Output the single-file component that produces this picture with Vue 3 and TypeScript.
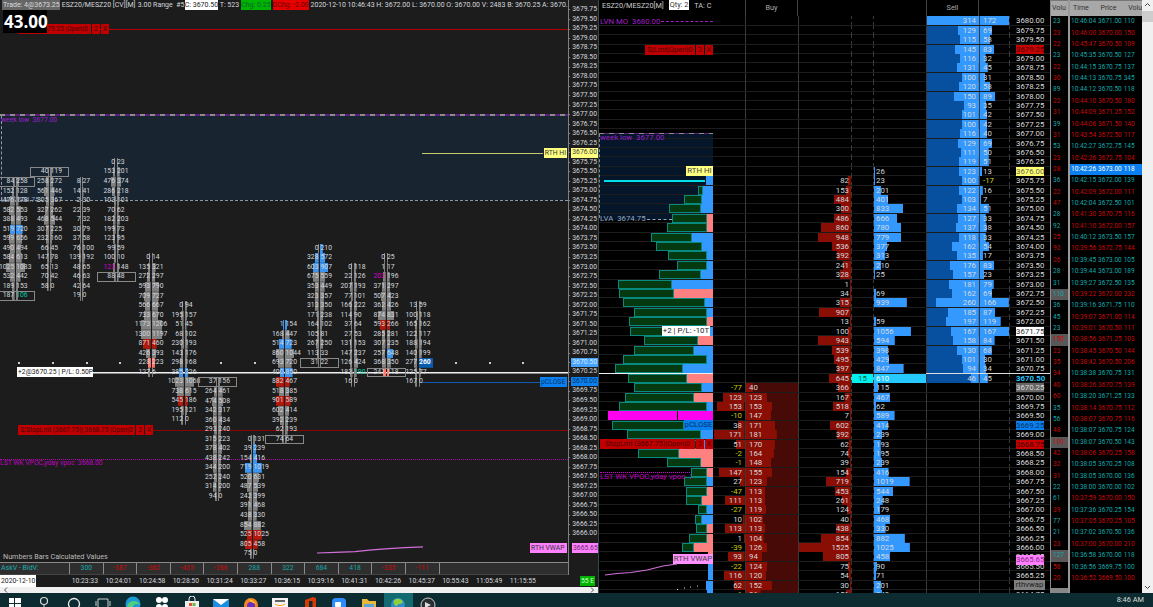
<script setup lang="ts">
type FpRow = { a: string; b: string; flags: string[] }

const ROW_L = 9.545

// footprint columns of the left chart: x = centre, r = first row under 3679.75
const fpData: { x: number; r: number; rows: string }[] = [
  { x: 14.7, r: 18, rows: '84,258,box 152,128 476,178 582,553 388,493 519,720,lb,rb 599,656 490,494 584,613 1025,1083 532,442 189,153 187,106,box,rt' },
  { x: 49, r: 17, rows: '40,119,box 258,272 561,446 305,367 327,262 468,544 307,225 232,160 66,45 147,78 65,13 70,42 58,0' },
  { x: 81, r: 18, rows: '8,27 14,41 2,30 22,39 7,32 30,79 37,58 76,100 139,192 48,65 46,63 42,64 19,0' },
  { x: 115.5, r: 16, rows: '0,23 153,201 476,374 286,218 103,101 70,62 182,203 199,73 123,95 99,59 100,10 123,148,lm 88,48,box' },
  { x: 150.5, r: 26, rows: '0,14 135,321 272,297 593,790 709,727 566,667 733,670 1173,1206 1300,1197 871,460,lr,rr 426,393 228,223,lp,rp 127,6' },
  { x: 183.5, r: 31, rows: '0,94 195,157 51,45 68,102 230,193 143,176 298,168 385,226,lb,rb 1023,1068 738,615 545,186,lr,rr 195,121 112,0' },
  { x: 217, r: 39, rows: '37,156,box 264,461 474,508 342,317 360,434 293,240 315,223 378,402 438,242 344,200 252,240 314,200 94,0' },
  { x: 252, r: 45, rows: '0,131 39,239,rb 154,416,rb 719,1019,lb,rb 520,631 487,539 242,399 391,468 438,330 854,882 525,1025,lr,rr 805,458,lr,rr 75,0' },
  { x: 284, r: 33, rows: '1,154,lb,rb 168,447 514,723,lb,rb 860,1044 693,720 400,850,lb,rb 882,467,lr,rr 518,385 901,589,lr,rr 602,414 392,239 62,193 74,64,box' },
  { x: 319, r: 25, rows: '0,210,rb 328,572,lb,rb 603,907,lb,rb 675,559 353,449 323,357 313,350 171,238 164,102 105,81 267,250 113,33 31,22,box' },
  { x: 352.5, r: 27, rows: '0,118 22,126 207,193 77,101 166,222 114,90 37,64 27,53 131,153 147,237 126,424 183,190,rt 16,0' },
  { x: 385.5, r: 26, rows: '0,25 1,17 202,196,lm 371,297 507,423 362,426 874,831 593,266,lr,rr 285,281 307,235 257,648,rb 368,350 241,118,box,lp,rp' },
  { x: 417.5, r: 31, rows: '13,59 100,118 165,162 122,117 188,194 140,199 277,260,rs 125,77 167,0' },
]

const fpColumns = fpData.map((c) => ({
  left: c.x - 18,
  top: 10 + ROW_L * c.r - ROW_L / 2,
  rows: c.rows.split(' ').map((s): FpRow => {
    const [a, b, ...flags] = s.split(',')
    return { a, b, flags }
  }),
}))

function fpBar(v: string) {
  return { backgroundSize: `${Math.min(10, 1.2 + Number(v) * 0.0075)}px 100%` }
}

const dots = [18, 52, 86, 119, 220, 254, 455, 489, 522]

const axisRows = Array.from({ length: 56 }, (_, r) => (3679.75 - r * 0.25).toFixed(2))
const axisTags: Record<string, string> = { '3676.00': 'yellow', '3670.50': 'sky', '3670.00': 'blue' }

const calc: [string, boolean][] = [
  ['300', true], ['-387', false], ['-362', false], ['-435', false], ['-286', false], ['288', true],
  ['322', true], ['684', true], ['418', true], ['-335', false], ['-111', false], ['', true],
]
const times = ['10:23:33', '10:24:01', '10:24:58', '10:28:50', '10:31:24', '10:33:27', '10:36:15', '10:39:16', '10:41:31', '10:42:26', '10:45:37', '10:55:43', '11:05:49', '11:15:55']

// ladder columns, indexed by row under 3680.00
const sellA = [314, 129, 115, 145, 116, 131, 100, 120, 150, 93, 101, 100, 116, 129, 111, 119, 123, 100, 122, 103, 134, 127, 137, 118, 162, 135, 176, 157, 181, 162, 260, 185, 197, 167, 158, 130, 101, 94, 46]
const sellB = [172, 69, 58, 83, 32, 45, 31, 58, 89, 35, 42, 42, 40, 69, 50, 51, 13, -17, 16, 7, 51, 33, 38, 33, 54, 17, 83, 23, 79, 69, 166, 87, 119, 167, 84, 68, 30, 34, 45]
const bidSize: Record<number, number> = {}
const askSize: Record<number, number> = {}
;[82, 153, 484, 300, 486, 860, 948, 536, 392, 241, 328, 1, 34, 315, 907, 13, 100, 943, 539, 495, 397, 645, 366, 167, 518, 7, 602, 392, 62, 74, 39, 154, 719, 453, 261, 124, 40, 438, 854, 1525, 805, 75, 54, 30, 151].forEach((v, k) => (bidSize[k + 17] = v))
;[26, 23, 201, 401, 833, 666, 780, 779, 377, 313, 210, 25, 0, 69, 939, 0, 59, 1056, 594, 398, 429, 847, 610, 115, 467, 62, 589, 414, 239, 193, 195, 239, 416, 1019, 544, 248, 179, 468, 330, 882, 1025, 458, 90, 71, 201, 240].forEach((v, k) => (askSize[k + 16] = v))
const buyA = [-77, 123, 153, -10, 38, 171, 51, -2, -1, 147, 27, -47, 111, -27, 10, 113, 1, -39, 93, -22, 116, 62, -6]
const buyB = [40, 123, 153, 147, 171, 181, 170, 164, 148, 155, 123, 113, 113, 119, 102, 113, 104, 126, 94, 124, 120, 152, 86]

// volume profile: [green left, green right, fill colour], in px from the panel edge, from row 17
const profile: [number, number, string][] = [
  [107, 107, 'b'], [99, 104, 'b'], [85, 103, 'b'], [70, 102, 'b'], [73, 108, 'p'], [68, 108, 'p'], [52, 93, 'b'],
  [57, 103, 'b'], [69, 108, 'b'], [78, 108, 'b'], [60, 102, 'b'], [19, 73, 'b'], [20, 75, 'p'], [24, 106, 'b'],
  [35, 108, 'b'], [30, 108, 'p'], [31, 108, 'b'], [45, 99, 'p'], [35, 95, 'b'], [24, 108, 'b'], [16, 84, 'b'],
  [29, 88, 'p'], [35, 103, 'b'], [26, 95, 'p'], [20, 108, 'b'], [9, 78, 'm'], [13, 85, 'b'], [28, 102, 'b'],
  [33, 100, 'b'], [39, 80, 'p'], [68, 102, 'p'], [92, 108, 'p'], [85, 108, 'b'], [87, 108, 'p'], [87, 103, 'p'],
  [99, 108, 'b'], [96, 103, 'b'], [97, 108, 'p'], [90, 108, 'p'], [83, 95, 'p'], [109, 109, 'p'], [109, 109, 'b'],
  [109, 109, 'b'], [107, 107, 'b'], [108, 108, 'b'],
]

const priceTags: Record<number, string> = { 3: 'red', 16: 'yellow', 33: 'white', 38: 'now', 39: 'grey', 43: 'blue', 45: 'red' }

const ladder = Array.from({ length: 62 }, (_, i) => {
  const p = i >= 17 ? profile[i - 17] : undefined
  return {
    i,
    price: (3680 - i * 0.25).toFixed(2),
    tag: priceTags[i] ?? '',
    p,
    sa: sellA[i],
    sb: sellB[i],
    bid: bidSize[i],
    ask: askSize[i],
    ba: buyA[i - 39],
    bb: buyB[i - 39],
  }
})

function w(v: number, k: number) {
  return { backgroundSize: `${Math.max(1, Math.abs(v) * k)}px 100%` }
}

// time and sales: volume, up?
const volCol: [number, boolean][] = [
  [23, true], [23, false], [22, false], [23, true], [22, false], [30, false], [89, true], [22, false], [31, false], [39, true],
  [31, false], [53, true], [23, false], [28, false], [36, true], [22, false], [47, false], [28, true], [92, true], [25, false],
  [92, false], [26, false], [28, true], [31, true], [110, true], [36, true], [45, true], [23, true], [150, false], [23, false],
  [35, false], [34, false], [40, false], [60, false], [35, true], [56, true], [48, false], [109, false], [42, false], [32, false],
  [31, false], [22, true], [61, true], [39, false], [77, true], [21, true], [23, false], [127, true], [58, false], [20, false],
]
const greyVol = [24, 28, 37, 47]
const tape = `10:46:04 3671.00 110 u|10:46:00 3670.00 150 d|10:45:47 3670.50 109 d|10:45:35 3670.50 127 u|10:44:15 3670.75 137 u|10:44:13 3670.75 345 u|10:44:12 3670.50 118 u|10:44:10 3670.50 180 d|10:44:09 3671.25 152 d|10:44:06 3671.50 140 d|10:43:54 3672.50 117 d|10:42:27 3672.75 145 u|10:42:26 3672.75 104 d|10:42:26 3673.00 118 s|10:42:15 3672.00 139 u|10:42:09 3672.00 111 d|10:42:04 3672.50 101 u|10:41:30 3670.75 116 d|10:41:10 3672.00 157 d|10:40:12 3673.50 157 u|10:39:56 3672.75 144 d|10:39:45 3673.00 105 u|10:39:44 3673.00 189 u|10:39:27 3672.50 135 u|10:39:22 3672.00 232 d|10:39:16 3671.75 110 u|10:39:07 3671.00 114 d|10:39:01 3670.50 111 d|10:38:56 3671.25 103 d|10:38:45 3670.50 144 d|10:38:42 3670.50 206 d|10:38:38 3670.75 131 u|10:38:26 3670.75 139 d|10:38:20 3671.25 133 u|10:38:14 3670.75 112 d|10:38:07 3670.75 116 d|10:38:07 3670.75 124 u|10:38:07 3670.50 143 u|10:38:06 3670.25 158 d|10:38:05 3670.25 108 u|10:38:05 3670.00 136 u|10:38:00 3670.00 102 u|10:37:59 3670.00 150 d|10:37:36 3670.25 154 u|10:37:05 3670.25 105 d|10:37:02 3670.50 136 u|10:37:00 3670.00 210 d|10:36:58 3670.00 118 u|10:36:56 3669.75 100 u|10:36:52 3669.50 100 d`
  .split('|')
  .map((s) => s.split(' '))
</script>

<template>
  <div class="screen">
    <div class="desk">
      <!-- left footprint chart -->
      <section class="left">
        <div class="left-main">
          <div class="plot">
            <div class="canvas">
              <div class="topbar">
                <span class="t-trade">Trade: 4@3673.25</span>
                <span class="t-sym">ESZ20/MESZ20 [CV][M]</span>
                <span class="t-range">3.00 Range&nbsp; #5</span>
                <span class="t-close">C: 3670.50</span>
                <span>T: 523</span>
                <span class="t-chg">Chg: 0.25</span>
                <span class="t-dchg">DChg: -2.00</span>
                <span class="t-rest">2020-12-10 10:46:43 H: 3672.00 L: 3670.00 O: 3670.00 V: 2483 B: 3670.25 A: 3670.50 4</span>
              </div>

              <div class="shade"></div>
              <div class="line-order"></div>
              <div class="order order-top"><b class="seg grow">S|Lmt 3679.25 |Open|0</b><b class="seg">2</b><b class="seg">X</b></div>
              <div class="big-price">43.00</div>

              <div class="week-line"></div>
              <div class="week-edge"></div>
              <div class="week-text">week low&nbsp; 3677.00</div>
              <div class="lva-line"></div>
              <div class="lva-text">LVA 3674.75</div>

              <div class="rth-line"></div>
              <div class="rth-hi">RTH HI</div>

              <div class="line-white"></div>
              <div class="pos-label">+2@3670.25 | P/L: 0.50P</div>
              <div class="line-pclose"></div>
              <div class="pclose">pCLOSE</div>

              <div class="line-stop"></div>
              <div class="order order-stop"><b class="seg grow">S|StopLmt (3667.75)| 3668.75 |Open|0</b><b class="seg">2</b><b class="seg">X</b></div>
              <div class="vpoc-line"></div>
              <div class="vpoc-text">LST WK VPOC,yday vpoc&nbsp; 3668.00</div>

              <svg class="vwap-curve" width="120" height="10" viewBox="0 0 120 10">
                <polyline points="0,8 18,7.4 38,6.6 55,4.8 72,3.6 88,2.6 106,1.8" fill="none" stroke="#d070d8" stroke-width="1.2" />
              </svg>
              <div class="rth-vwap">RTH VWAP</div>
              <div class="calc-title">Numbers Bars Calculated Values</div>

              <i v-for="d in dots" :key="d" class="dot" :style="{ left: d + 'px' }"></i>

              <!-- footprint bars sit at their time/price place -->
              <div v-for="(c, n) in fpColumns" :key="n" class="fp" :style="{ left: c.left + 'px', top: c.top + 'px' }">
                <div v-for="(r, k) in c.rows" :key="k" class="fp-row" :class="{ boxed: r.flags.includes('box') }">
                  <span
                    class="fp-l"
                    :class="{ red: r.flags.includes('lr'), azure: r.flags.includes('lb'), salmon: r.flags.includes('lp'), mag: r.flags.includes('lm') }"
                    :style="fpBar(r.a)"
                  >{{ r.a }}</span>
                  <span
                    class="fp-r"
                    :class="{ red: r.flags.includes('rr'), azure: r.flags.includes('rb'), salmon: r.flags.includes('rp'), teal: r.flags.includes('rt'), strong: r.flags.includes('rs') }"
                    :style="fpBar(r.b)"
                  >{{ r.b }}</span>
                </div>
              </div>
            </div>

            <div class="calc-row">
              <span class="calc-name">AskV - BidV:</span>
              <span v-for="(c, n) in calc" :key="n" class="calc-cell" :class="c[1] ? 'up' : 'down'">{{ c[0] }}</span>
            </div>
          </div>

          <div class="axis">
            <div v-for="a in axisRows" :key="a" class="axis-row">
              <span :class="axisTags[a]">{{ a }}</span>
            </div>
            <span class="axis-vwap">3665.65</span>
          </div>
        </div>

        <div class="time-row">
          <span class="date">2020-12-10</span>
          <div class="times">
            <span v-for="t in times" :key="t">{{ t }}</span>
          </div>
          <span class="latency">55 E</span>
        </div>
        <div class="hscroll">
          <svg width="5" height="6" viewBox="0 0 5 6"><path d="M4 .5 1.5 3 4 5.5" fill="none" stroke="#555" /></svg>
          <svg width="5" height="6" viewBox="0 0 5 6"><path d="M1 .5 3.5 3 1 5.5" fill="none" stroke="#555" /></svg>
        </div>
      </section>

      <!-- price ladder with volume profile -->
      <section class="dom">
        <div class="dom-head">
          <div class="h-info">
            <span>ESZ20/MESZ20[M]</span>
            <span class="qty">Qty: 2</span>
            <span>TA: C</span>
          </div>
          <div class="h-buy">Buy</div>
          <div class="h-sell">Sell</div>
        </div>

        <div class="ladder">
          <div class="d-shade"></div>

          <div v-for="r in ladder" :key="r.i" class="row">
            <div class="c-prof">
              <template v-if="r.p">
                <span class="prof-gap" :style="{ width: r.p[0] + 'px' }"></span>
                <span v-if="r.p[1] > r.p[0]" class="prof-green" :class="{ magenta: r.p[2] === 'm' }" :style="{ width: r.p[1] - r.p[0] + 'px' }"></span>
                <span class="prof-fill" :class="r.p[2]"></span>
              </template>
            </div>
            <div class="c-a" :class="{ neg: r.ba < 0 }" :style="r.ba !== undefined && r.ba > 0 ? w(r.ba, 0.18) : undefined">{{ r.ba }}</div>
            <div class="c-b" :class="{ on: r.bb !== undefined }" :style="r.bb !== undefined ? w(r.bb, 0.17) : undefined">{{ r.bb }}</div>
            <div class="c-bid" :class="{ on: r.bid !== undefined }" :style="r.bid !== undefined ? w(r.bid, 0.0348) : undefined">{{ r.bid }}</div>
            <div class="c-mid" :class="{ cur: r.i === 38 }">{{ r.i === 38 ? 15 : '' }}</div>
            <div class="c-ask" :class="{ on: r.ask !== undefined, cur: r.i === 38 }" :style="r.ask ? w(r.ask, 0.035) : { backgroundSize: '0 0' }">{{ r.ask || '' }}</div>
            <div class="c-sa" :class="{ on: r.sa !== undefined }" :style="r.sa !== undefined ? w(r.sa, 0.166) : undefined">{{ r.sa }}</div>
            <div class="c-sb" :class="{ on: r.sb !== undefined, neg: r.sb < 0 }" :style="r.sb !== undefined ? w(r.sb, 0.174) : { backgroundSize: '0 0' }">{{ r.sb }}</div>
            <div class="c-price"><span :class="r.tag">{{ r.price }}</span></div>
          </div>

          <!-- labels drawn over the profile -->
          <div class="d-week-edge"></div>
          <div class="d-lvn">LVN MO&nbsp; 3680.00<i></i></div>
          <div class="order d-order-top"><b class="seg grow">S|Lmt|Open|0</b><b class="seg">2</b><b class="seg">X</b></div>
          <div class="d-week-line"></div>
          <div class="d-week">week low&nbsp; 3677.00</div>
          <div class="d-rth-hi">RTH HI</div>
          <div class="d-cyan"></div>
          <div class="d-lva">LVA&nbsp; 3674.75<i></i></div>
          <div class="d-pos">+2 | P/L: -10T</div>
          <div class="d-white"></div>
          <div class="d-white2"></div>
          <div class="d-pclose">pCLOSE</div>
          <div class="order d-order-stop"><b class="seg grow">StopLmt (3667.75)|Open|0</b><b class="seg">2</b><b class="seg">X</b></div>
          <div class="d-vpoc-line"></div>
          <div class="d-vpoc">LST WK VPOC,yday vpoc&nbsp; 36</div>
          <div class="d-vwap">RTH VWAP</div>
          <svg class="d-curve" width="78" height="30" viewBox="0 0 78 30">
            <polyline points="0,12 12,10.5 26,9.5 42,7 58,3 72,1" fill="none" stroke="#d070d8" stroke-width="1.2" />
            <path d="M72 26.5h1M79 25h1M85 24h1M92 23h1" stroke="#ddd" />
          </svg>
          <span class="d-tag-vwap">3665.65</span>
          <span class="d-tag-rth">rthvwap</span>
        </div>
      </section>

      <!-- volume and time and sales -->
      <section class="tape">
        <div class="vol">
          <div class="head">Volu</div>
          <div class="vol-body">
            <div v-for="(v, n) in volCol" :key="n" class="vol-row" :class="[v[1] ? 'up' : 'down', { grey: greyVol.includes(n) }]">{{ v[0] }}</div>
          </div>
          <div class="vol-foot"></div>
        </div>
        <div class="sales">
          <div class="head sales-head"><span>Time</span><span>Price</span><span>Volu</span></div>
          <div class="sales-body">
            <div v-for="(t, n) in tape" :key="n" class="sale" :class="t[3]">
              <span>{{ t[0] }}</span><span>{{ t[1] }}</span><span>{{ t[2] }}</span>
            </div>
          </div>
        </div>
        <div class="vscroll">
          <svg width="11" height="10" viewBox="0 0 11 10"><path d="M3 6 5.5 3.5 8 6" fill="none" stroke="#444" /></svg>
          <div class="thumb"></div>
          <svg class="down-arrow" width="11" height="10" viewBox="0 0 11 10"><path d="M3 4 5.5 6.5 8 4" fill="none" stroke="#444" /></svg>
        </div>
      </section>
    </div>

    <footer class="taskbar">
      <span class="task">
        <svg viewBox="0 0 16 16"><path fill="#fff" d="M2 2h5v5H2zM8 2h6v5H8zM2 8h5v6H2zM8 8h6v6H8z" /></svg>
      </span>
      <span class="task">
        <svg viewBox="0 0 16 16"><circle cx="8" cy="5" r="3.5" fill="none" stroke="#ddd" stroke-width="1.2" /><path d="M8 9v6" stroke="#ddd" /></svg>
      </span>
      <span class="task">
        <svg viewBox="0 0 16 16"><circle cx="8" cy="8" r="5.5" fill="none" stroke="#eee" stroke-width="1.3" /></svg>
      </span>
      <span class="task">
        <svg viewBox="0 0 16 16"><path d="M3 3h10v9H3z" fill="none" stroke="#ccc" /><path d="M1 5v5M15 5v5" stroke="#ccc" /></svg>
      </span>
      <span class="task">
        <svg viewBox="0 0 16 16"><circle cx="8" cy="8" r="7.5" fill="#1c9ad6" /><path d="M2 10c2-6 11-7 13-1-3-2-7-1-7 2 0 2 2 3 4 3-4 2-8 0-10-4z" fill="#4fd07a" /></svg>
      </span>
      <span class="task">
        <svg viewBox="0 0 16 16"><g fill="#fff"><circle cx="5" cy="4" r="3" /><circle cx="11" cy="4" r="3" /><circle cx="5" cy="11" r="3" /><circle cx="11" cy="11" r="3" /></g></svg>
      </span>
      <span class="task">
        <svg viewBox="0 0 16 16"><path fill="#eee" d="M1 5h14v11H1z" /><path d="M5 5V3a3 3 0 0 1 6 0v2" fill="none" stroke="#eee" /><path fill="#e2502a" d="M5 7h3v3H5z" /><path fill="#6db33f" d="M8.5 7h3v3h-3z" /></svg>
      </span>
      <span class="task">
        <svg viewBox="0 0 16 16"><path fill="#1a8fe0" d="M0 3h16v13H0z" /><path fill="#fff" d="M0 3l8 6 8-6z" /></svg>
      </span>
      <span class="task">
        <svg viewBox="0 0 16 16"><circle cx="8" cy="9" r="7" fill="#f7841e" /><circle cx="8" cy="10" r="4" fill="#6a2fc0" /><path d="M5 2c2 2 5 2 8 6-2-1-6-2-8-6z" fill="#ffd23a" /></svg>
      </span>
      <span class="task">
        <svg viewBox="0 0 16 16"><path fill="#f4f4f4" d="M0 2h16v14H0z" /><path d="M3 5h10" stroke="#333" stroke-width="1.5" /><path d="M3 8c3 2 7 2 10 0" stroke="#f90" fill="none" /></svg>
      </span>
      <span class="task">
        <svg viewBox="0 0 16 16"><path fill="#d83b01" d="M3 4l8-3 3 1v12l-3 2-8-3z" /><path fill="#0c2a30" d="M7 5h3.5v7H7z" /></svg>
      </span>
      <span class="task">
        <svg viewBox="0 0 16 16"><rect x="1" y="2" width="14" height="14" rx="4" fill="#2d8cff" /><rect x="4" y="6" width="6" height="5" rx="1" fill="#fff" /></svg>
      </span>
      <span class="task">
        <svg viewBox="0 0 16 16"><path fill="#e8b83a" d="M1 3h5l2 2h7v11H1z" /><path fill="#5aa5d8" d="M3 8h10v8H3z" /></svg>
      </span>
      <span class="task active">
        <svg viewBox="0 0 16 16"><circle cx="8" cy="9" r="7" fill="#2c8fc9" /><path d="M4 4c3-2 7-2 9 2-2 3-5 1-6 4-2 0-4-2-3-6z" fill="#8fcf3c" /></svg>
      </span>
      <span class="task">
        <svg viewBox="0 0 16 16"><circle cx="8" cy="9" r="7" fill="#2a2f33" stroke="#ccc" /><path d="M5 6l6 3-6 3z" fill="#ddd" /></svg>
      </span>
      <span class="clock">8:46 AM</span>
    </footer>
  </div>
</template>

<style scoped>
.screen {
  width: 1153px;
  height: 607px;
  display: flex;
  flex-direction: column;
  overflow: hidden;
  background: #000;
  font-family: Roboto, "Liberation Sans", sans-serif;
  font-size: 6.8px;
  color: #d4d8dc;
}
.desk {
  display: flex;
  height: 593px;
}

/* left chart */
.left {
  width: 598px;
  flex: none;
  display: flex;
  flex-direction: column;
  background: #1c1c1c;
}
.left-main {
  display: flex;
  height: 575px;
}
.plot {
  width: 568px;
  display: flex;
  flex-direction: column;
}
.canvas {
  position: relative;
  flex: 1;
  overflow: hidden;
}
.topbar {
  position: relative;
  z-index: 5;
  display: flex;
  align-items: center;
  height: 10px;
  padding-left: 2px;
  gap: 2px;
  white-space: nowrap;
  overflow: hidden;
  background: #1c1c1c;
  font-size: 7px;
  line-height: 10px;
}
.t-trade {
  width: 57px;
  background: #666;
  color: #ddd;
  padding-left: 1px;
}
.t-sym {
  width: 74px;
  flex: none;
}
.t-range {
  width: 45px;
  flex: none;
}
.t-close {
  width: 33px;
  background: #fff;
  color: #222;
  text-align: center;
}
.t-chg {
  width: 30px;
  background: #00b400;
  color: #063;
  text-align: center;
}
.t-dchg {
  width: 38px;
  background: #e60000;
  color: #600;
  text-align: center;
}
.shade {
  position: absolute;
  left: 0;
  right: 0;
  top: 115px;
  height: 85px;
  background: #192431;
}
.line-order {
  position: absolute;
  left: 100px;
  right: 0;
  top: 28.5px;
  height: 1.5px;
  background: #b00000;
}
.order {
  position: absolute;
  display: flex;
  gap: 1px;
  height: 10px;
  line-height: 10px;
  font-size: 6.6px;
}
.seg {
  min-width: 8px;
  padding: 0 1px;
  background: #c00000;
  color: #4a0000;
  font-weight: 400;
  text-align: center;
  box-sizing: border-box;
}
.seg.grow {
  flex: 1;
  min-width: 0;
  white-space: nowrap;
}
.order-top {
  left: 18px;
  top: 24px;
  width: 91px;
}
.big-price {
  position: absolute;
  z-index: 4;
  left: 3px;
  top: 10px;
  width: 44px;
  height: 23px;
  padding-left: 1px;
  box-sizing: border-box;
  background: #000;
  color: #fff;
  font-family: "Open Sans", Roboto, sans-serif;
  font-size: 17px;
  font-weight: 700;
  line-height: 23px;
}
.week-line {
  position: absolute;
  left: 0;
  right: 0;
  top: 114px;
  height: 2px;
  background: repeating-linear-gradient(90deg, #8c8c8c 0 5px, #5d1f80 5px 10px);
}
.week-edge {
  position: absolute;
  left: 1px;
  top: 116px;
  height: 84px;
  border-left: 1px dashed #99a;
}
.week-text {
  position: absolute;
  left: 1px;
  top: 115px;
  color: #9a1fc8;
  line-height: 10px;
}
.lva-line {
  position: absolute;
  left: 0;
  right: 0;
  top: 200px;
  border-top: 1px dashed #8797a5;
}
.lva-text {
  position: absolute;
  left: 1px;
  top: 195px;
  color: #8b9cc0;
  line-height: 10px;
}
.rth-line {
  position: absolute;
  left: 422px;
  right: 25px;
  top: 152.5px;
  height: 1.5px;
  background: #c8c86c;
}
.rth-hi,
.rth-vwap,
.pclose {
  position: absolute;
  right: 1px;
  height: 10px;
  padding: 0 1px;
  line-height: 10px;
  color: #333;
  white-space: nowrap;
  box-sizing: border-box;
}
.rth-hi {
  top: 148px;
  background: #ffff80;
}
.rth-vwap {
  top: 543px;
  width: 37px;
  background: #ff80ff;
}
.pclose {
  top: 377px;
  width: 27px;
  background: #0a80f0;
  color: #063264;
}
.line-white {
  position: absolute;
  left: 90px;
  right: 0;
  top: 372px;
  height: 1px;
  background: #f0f0f0;
  box-shadow: 0 1px 0 #888;
}
.pos-label {
  position: absolute;
  left: 17px;
  top: 367px;
  width: 76px;
  height: 10px;
  box-sizing: border-box;
  background: #fff;
  color: #222;
  line-height: 10px;
  padding-left: 1px;
  white-space: nowrap;
}
.line-pclose {
  position: absolute;
  left: 422px;
  right: 26px;
  top: 381.5px;
  height: 1.5px;
  background: #0f5cad;
}
.line-stop {
  position: absolute;
  left: 150px;
  right: 0;
  top: 429.5px;
  height: 1.5px;
  background: #8f0000;
}
.order-stop {
  left: 18px;
  top: 425px;
  width: 135px;
}
.vpoc-line {
  position: absolute;
  left: 0;
  right: 0;
  top: 459px;
  border-top: 1px dotted #b000b0;
}
.vpoc-text {
  position: absolute;
  left: 0;
  top: 458px;
  color: #c000c0;
  line-height: 10px;
  white-space: nowrap;
}
.vwap-curve {
  position: absolute;
  left: 317px;
  top: 545px;
}
.calc-title {
  position: absolute;
  left: 3px;
  bottom: 0;
  color: #bbb;
  font-size: 7.2px;
  line-height: 10px;
}
.dot {
  position: absolute;
  top: 362px;
  width: 2px;
  height: 2px;
  background: #ccc;
}
.fp {
  position: absolute;
  width: 37px;
  display: flex;
  flex-direction: column;
}
.fp-row {
  display: flex;
  gap: 1px;
  height: 9.545px;
  line-height: 9.5px;
  box-sizing: border-box;
}
.fp-row.boxed {
  outline: 1px solid #888;
  outline-offset: -1px;
  margin: 0 -1px;
  padding: 0 1px;
}
.fp-l,
.fp-r {
  width: 18px;
  background-repeat: no-repeat;
  background-image: linear-gradient(#808080, #808080);
  white-space: nowrap;
}
.fp-l {
  text-align: right;
  background-position: right center;
  padding-right: 0.5px;
}
.fp-r {
  background-position: left center;
  padding-left: 0.5px;
}
.red {
  background-image: linear-gradient(#b3180c, #b3180c);
}
.azure {
  background-image: linear-gradient(#3d94ee, #3d94ee);
}
.salmon {
  background-image: linear-gradient(#ff7a6e, #ff7a6e);
}
.mag {
  color: #d000c0;
}
.teal {
  color: #00c8a8;
}
.strong {
  background-image: linear-gradient(#0a5cb0, #0a5cb0);
  background-size: 14px 100% !important;
  color: #fff;
  font-weight: 700;
}
.calc-row {
  display: flex;
  height: 13px;
  flex: none;
  box-sizing: border-box;
  border-top: 1px solid #8a8a8a;
  border-bottom: 1px solid #444;
  background: #2e2e2e;
  line-height: 11px;
}
.calc-name {
  width: 69px;
  flex: none;
  padding-left: 1px;
  color: #20b0b0;
  box-sizing: border-box;
  font-size: 7px;
}
.calc-cell {
  width: 33.6px;
  flex: none;
  box-sizing: border-box;
  border-left: 1px solid #8a8a8a;
  text-align: center;
}
.calc-cell:last-child {
  width: auto;
  flex: 1;
}
.up {
  color: #14a8a8;
}
.down {
  color: #c80a0a;
}
.axis {
  position: relative;
  width: 30px;
  padding-top: 5.2px;
  box-sizing: border-box;
  border-left: 1px solid #808080;
  overflow: hidden;
  height: 575px;
}
.axis-row {
  display: flex;
  align-items: center;
  height: 9.545px;
}
.axis-row::before {
  content: "";
  width: 2px;
  height: 1px;
  margin-right: 1px;
  background: #808080;
}
.axis-row span {
  padding: 0 1px;
  line-height: 9.5px;
}
.axis .yellow {
  background: #ffff80;
  color: #444;
}
.axis .sky {
  background: #45a3ff;
  color: #d8ecff;
}
.axis .blue {
  background: #0a80f0;
  color: #053060;
}
.axis-vwap {
  position: absolute;
  left: 3px;
  top: 543px;
  padding: 0 1px;
  height: 10px;
  line-height: 10px;
  background: #ff80ff;
  color: #6a2a6a;
}
.time-row {
  display: flex;
  align-items: center;
  height: 12px;
  background: #1c1c1c;
  line-height: 12px;
}
.date {
  width: 36px;
  flex: none;
  padding-left: 1px;
  background: #fff;
  color: #222;
  box-sizing: border-box;
  white-space: nowrap;
}
.times {
  display: flex;
  margin-left: 32px;
  white-space: nowrap;
}
.times span {
  width: 33.7px;
  text-align: center;
}
.latency {
  margin-left: auto;
  margin-right: 3px;
  width: 15px;
  height: 10px;
  line-height: 10px;
  background: #00b400;
  color: #cfc;
  text-align: center;
  white-space: nowrap;
}
.hscroll {
  display: flex;
  justify-content: space-between;
  align-items: center;
  height: 6px;
  padding: 0 3px;
  background: #f0f0f0;
}

/* ladder */
.dom {
  width: 452px;
  flex: none;
  display: flex;
  flex-direction: column;
  box-sizing: border-box;
  border-left: 1px solid #2f4a4a;
}
.dom-head {
  display: flex;
  height: 16.3px;
  line-height: 11px;
  font-size: 7.3px;
  flex: none;
  color: #ccc;
}
.h-info {
  width: 146px;
  display: flex;
  gap: 5px;
  padding-left: 3px;
  box-sizing: border-box;
  white-space: nowrap;
}
.qty {
  background: #fff;
  color: #333;
  padding: 0 1px;
  height: 10px;
  line-height: 10px;
}
.h-buy,
.h-sell {
  text-align: center;
  line-height: 16px;
  color: #aaa;
  border-left: 1px solid #444;
  box-sizing: border-box;
}
.h-buy {
  width: 53px;
  margin-right: 128px;
  border-right: 1px solid #444;
}
.h-sell {
  width: 53px;
  border-right: 1px solid #444;
}
.ladder {
  position: relative;
  flex: 1;
  overflow: hidden;
  font-size: 7.8px;
}
.row {
  position: relative;
  display: grid;
  grid-template-columns: 114px 32px 53px 53px 22px 53px 53px 30px 41px;
  height: 9.41px;
  line-height: 9px;
  box-sizing: border-box;
  border-bottom: 1px solid #1c1c1c;
  white-space: nowrap;
}
.c-prof {
  display: flex;
  align-items: stretch;
}
.prof-gap {
  flex: none;
}
.prof-green {
  flex: none;
  box-sizing: border-box;
  border: 1px solid #088a80;
  background: #05390f;
}
.prof-green.magenta {
  border: none;
  background: #ff00f0;
  margin-right: 1px;
}
.prof-fill {
  flex: 1;
}
.prof-fill.b {
  background: #3399ff;
}
.prof-fill.p {
  background: #ff8080;
}
.prof-fill.m {
  background: #ff00f0;
}
.c-a {
  text-align: right;
  padding-right: 3px;
  background: linear-gradient(#8a0e04, #8a0e04) no-repeat right center;
  background-size: 0 0;
}
.c-a.neg {
  color: #c8c800;
}
.c-b,
.c-bid,
.c-ask,
.c-sa,
.c-sb,
.c-mid {
  border-left: 1px solid #3a3a3a;
}
.c-b {
  padding-left: 3px;
}
.c-b.on {
  background: linear-gradient(#8a0e04, #8a0e04) no-repeat left center, #480a06;
}
.c-bid {
  text-align: right;
  padding-right: 2px;
}
.c-bid.on {
  background: linear-gradient(#8a0e04, #8a0e04) no-repeat right center;
}
.c-mid {
  border-left: 1px dashed #3a3a3a;
  text-align: center;
}
.c-mid.cur {
  background: #00f0f0;
  color: #064;
}
.c-ask {
  border-left: 1px dashed #3a3a3a;
  padding-left: 2px;
}
.c-ask.on {
  background: linear-gradient(#3399ff, #3399ff) no-repeat left center;
}
.c-ask.cur {
  background: #25c8ff !important;
  color: #fff;
}
.c-sa {
  text-align: right;
  padding-right: 3px;
}
.c-sa.on {
  background: linear-gradient(#3399ff, #3399ff) no-repeat right center, #06509f;
}
.c-sb {
  padding-left: 3px;
}
.c-sb.on {
  background: linear-gradient(#3399ff, #3399ff) no-repeat left center;
}
.c-sb.neg {
  color: #d8d800;
  background-image: none;
}
.c-price {
  border-left: 1px dashed #3a3a3a;
  display: flex;
  justify-content: center;
  color: #dcdcdc;
}
.c-price span {
  width: 28px;
  text-align: center;
}
.c-price .red {
  background: #c80000;
  color: #4a0000;
}
.c-price .yellow {
  background: #ffff70;
  color: #665;
}
.c-price .white {
  background: #fff;
  color: #333;
}
.c-price .now {
  color: #25c8ff;
  font-weight: 700;
}
.c-price .grey {
  background: #666;
  color: #ddd;
}
.c-price .blue {
  background: #0a80f0;
  color: #053060;
}
.d-shade {
  position: absolute;
  left: 0;
  top: 118px;
  width: 114px;
  height: 86px;
  background: #05152a;
}
.d-week-edge {
  position: absolute;
  left: 0;
  top: 118px;
  height: 84px;
  border-left: 1px dashed #8a8a8a;
}
.d-lvn {
  position: absolute;
  left: 1px;
  top: 0;
  display: flex;
  align-items: center;
  width: 113px;
  height: 10px;
  color: #a11fc8;
  white-space: nowrap;
}
.d-lvn i {
  flex: 1;
  margin-left: 1px;
  border-top: 1px dashed #a11fc8;
}
.d-order-top {
  left: 46px;
  top: 29px;
  width: 68px;
  font-size: 7.6px;
}
.d-week-line {
  position: absolute;
  left: 0;
  top: 117px;
  width: 114px;
  height: 1px;
  background: repeating-linear-gradient(90deg, #8c8c8c 0 5px, #5d1f80 5px 10px);
}
.d-week {
  position: absolute;
  left: 1px;
  top: 117px;
  color: #9a1fc8;
  line-height: 10px;
}
.d-rth-hi {
  position: absolute;
  left: 87px;
  top: 150px;
  width: 27px;
  height: 10px;
  background: #ffff80;
  color: #444;
  line-height: 10px;
  text-align: center;
}
.d-cyan {
  position: absolute;
  left: 5px;
  top: 164px;
  width: 101px;
  height: 2px;
  background: #00e0e8;
}
.d-lva {
  position: absolute;
  left: 1px;
  top: 198px;
  width: 72px;
  display: flex;
  align-items: center;
  color: #93a8c0;
  line-height: 10px;
  white-space: nowrap;
}
.d-lva i {
  flex: 1;
  margin-left: 1px;
  border-top: 1px dashed #93a8c0;
}
.d-pos {
  position: absolute;
  left: 63px;
  top: 310px;
  width: 48px;
  height: 10px;
  background: #fff;
  color: #222;
  line-height: 10px;
  text-align: center;
  white-space: nowrap;
}
.d-white {
  position: absolute;
  left: 0;
  top: 356.5px;
  width: 114px;
  height: 1px;
  background: #eee;
}
.d-white2 {
  position: absolute;
  left: 327px;
  top: 356.5px;
  width: 124px;
  height: 1px;
  background: #ddd;
}
.d-pclose {
  position: absolute;
  left: 85px;
  top: 404px;
  width: 29px;
  height: 10px;
  background: #0a80f0;
  color: #053060;
  line-height: 10px;
  text-align: center;
}
.d-order-stop {
  left: 1px;
  top: 423px;
  width: 113px;
  font-size: 7.2px;
}
.d-vpoc-line {
  position: absolute;
  left: 1px;
  top: 455.5px;
  width: 90px;
  border-top: 1px dotted #d000d0;
}
.d-vpoc {
  position: absolute;
  left: 1px;
  top: 456px;
  width: 91px;
  color: #c000c0;
  line-height: 10px;
  white-space: nowrap;
  overflow: hidden;
}
.d-vwap {
  position: absolute;
  left: 74px;
  top: 538px;
  width: 40px;
  height: 10px;
  background: #ff90ff;
  color: #444;
  line-height: 10px;
  text-align: center;
  white-space: nowrap;
}
.d-curve {
  position: absolute;
  left: 6px;
  top: 547px;
  overflow: visible;
}
.d-tag-vwap,
.d-tag-rth {
  position: absolute;
  left: 417px;
  width: 28px;
  height: 10px;
  line-height: 10px;
  text-align: center;
}
.d-tag-vwap {
  top: 539px;
  background: #ff80ff;
  color: #8a2a8a;
}
.d-tag-rth {
  top: 564px;
  left: 415px;
  width: 31px;
  background: #808080;
  color: #222;
}

/* right tape */
.tape {
  width: 103px;
  flex: none;
  display: flex;
  font-size: 6.5px;
}
.head {
  height: 16.3px;
  box-sizing: border-box;
  background: #a8a8a8;
  color: #333;
  line-height: 15px;
  font-size: 7px;
  border-top: 1px solid #777;
}
.vol {
  width: 18px;
  flex: none;
  display: flex;
  flex-direction: column;
  box-sizing: border-box;
  border-left: 1px solid #8a8a8a;
}
.vol .head {
  padding-left: 1px;
  white-space: nowrap;
  overflow: hidden;
}
.vol-body {
  flex: 1;
  background: #000;
}
.vol-row {
  height: 11.37px;
  line-height: 11.37px;
  padding-left: 2px;
}
.vol-row.grey {
  background: #585858;
}
.vol-foot {
  height: 5px;
  background: #888;
}
.sales {
  width: 74px;
  flex: none;
  display: flex;
  flex-direction: column;
  box-sizing: border-box;
  border-left: 2px solid #999;
  background: #000;
}
.sales-head {
  display: flex;
  justify-content: space-between;
  padding: 0 0 0 3px;
  gap: 8px;
}
.sales-body {
  flex: 1;
}
.sale {
  display: flex;
  gap: 2px;
  height: 11.37px;
  line-height: 11.37px;
  padding-left: 1px;
}
.sale.u {
  color: #14a8a8;
}
.sale.d {
  color: #c80a0a;
}
.sale.s {
  background: #0a80f0;
  color: #fff;
}
.vscroll {
  width: 11px;
  flex: none;
  display: flex;
  flex-direction: column;
  background: #f0f0f0;
}
.thumb {
  height: 11px;
  margin-top: 1px;
  background: #cdcdcd;
}
.down-arrow {
  margin-top: auto;
  margin-bottom: 1px;
}

/* windows taskbar, cut off by the bottom of the picture */
.taskbar {
  flex: 1;
  display: flex;
  align-items: flex-start;
  background: #0d2c31;
  overflow: hidden;
}
.task {
  width: 29.5px;
  height: 14px;
  flex: none;
  display: flex;
  justify-content: center;
  padding-top: 3px;
  box-sizing: border-box;
}
.task svg {
  width: 16px;
  height: 16px;
  flex: none;
}
.task.active {
  background: #136a70;
}
.clock {
  margin-left: auto;
  margin-right: 9px;
  color: #ddd;
  font-size: 7.4px;
  line-height: 14px;
}
</style>

<style>
html,
body {
  margin: 0;
  overflow: hidden;
  background: #000;
}
</style>
